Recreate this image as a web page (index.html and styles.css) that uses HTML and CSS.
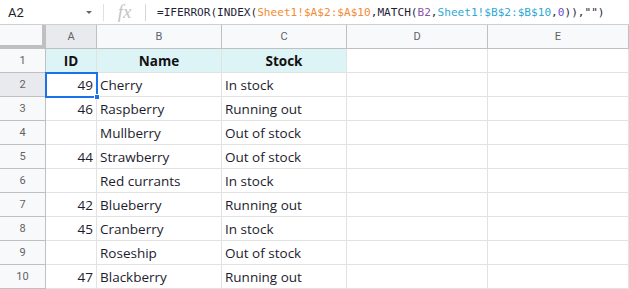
FILE: index.html
```html
<!DOCTYPE html>
<html lang="en">
<head>
    <meta charset="UTF-8">
    <title>Sheet</title>
    <link rel="stylesheet" href="styles.css">
</head>
<body>
    <div class="formula-bar">
        <div class="name-box">
            <span>A2</span>
            <span class="caret"></span>
        </div>
        <div class="fx">fx</div>
        <div class="formula">=IFERROR(INDEX(<span class="ref-a">Sheet1!$A$2:$A$10</span>,MATCH(<span class="ref-b">B2</span>,<span class="ref-c">Sheet1!$B$2:$B$10</span>,<span class="num">0</span>)),"")</div>
    </div>

    <div class="sheet">
        <div class="corner"></div>
        <div class="col-head active">A</div>
        <div class="col-head">B</div>
        <div class="col-head">C</div>
        <div class="col-head">D</div>
        <div class="col-head">E</div>

        <div class="row-head">1</div>
        <div class="cell title">ID</div>
        <div class="cell title">Name</div>
        <div class="cell title">Stock</div>
        <div class="cell"></div>
        <div class="cell"></div>

        <div class="row-head active">2</div>
        <div class="cell num selected">49<span class="handle"></span></div>
        <div class="cell">Cherry</div>
        <div class="cell">In stock</div>
        <div class="cell"></div>
        <div class="cell"></div>

        <div class="row-head">3</div>
        <div class="cell num">46</div>
        <div class="cell">Raspberry</div>
        <div class="cell">Running out</div>
        <div class="cell"></div>
        <div class="cell"></div>

        <div class="row-head">4</div>
        <div class="cell num"></div>
        <div class="cell">Mullberry</div>
        <div class="cell">Out of stock</div>
        <div class="cell"></div>
        <div class="cell"></div>

        <div class="row-head">5</div>
        <div class="cell num">44</div>
        <div class="cell">Strawberry</div>
        <div class="cell">Out of stock</div>
        <div class="cell"></div>
        <div class="cell"></div>

        <div class="row-head">6</div>
        <div class="cell num"></div>
        <div class="cell">Red currants</div>
        <div class="cell">In stock</div>
        <div class="cell"></div>
        <div class="cell"></div>

        <div class="row-head">7</div>
        <div class="cell num">42</div>
        <div class="cell">Blueberry</div>
        <div class="cell">Running out</div>
        <div class="cell"></div>
        <div class="cell"></div>

        <div class="row-head">8</div>
        <div class="cell num">45</div>
        <div class="cell">Cranberry</div>
        <div class="cell">In stock</div>
        <div class="cell"></div>
        <div class="cell"></div>

        <div class="row-head">9</div>
        <div class="cell num"></div>
        <div class="cell">Roseship</div>
        <div class="cell">Out of stock</div>
        <div class="cell"></div>
        <div class="cell"></div>

        <div class="row-head">10</div>
        <div class="cell num">47</div>
        <div class="cell">Blackberry</div>
        <div class="cell">Running out</div>
        <div class="cell"></div>
        <div class="cell"></div>
    </div>
</body>
</html>
```

FILE: styles.css
```css
* {
    box-sizing: border-box;
}
body {
    margin: 0;
    background: white;
    font-family: "Open Sans", Arial, sans-serif;
    width: 629px;
    overflow: hidden;
}
.formula-bar {
    display: flex;
    align-items: center;
    height: 25px;
    border-bottom: 1px solid #d0d0d0;
}
.name-box {
    width: 104px;
    height: 17px;
    display: flex;
    align-items: center;
    justify-content: space-between;
    padding: 0 8px 0 8px;
    border-right: 1px solid #e0e0e0;
    font-family: Roboto, Arial, sans-serif;
    font-size: 13px;
    color: #222;
}
.caret {
    width: 0;
    height: 0;
    border-left: 3px solid transparent;
    border-right: 3px solid transparent;
    border-top: 3px solid #666;
    margin-right: 3px;
}
.fx {
    width: 42px;
    height: 17px;
    text-align: center;
    border-right: 1px solid #d6d6d6;
    font-family: "Liberation Serif", serif;
    font-style: italic;
    font-size: 19px;
    line-height: 15px;
    color: #c4c4c4;
}
.formula {
    padding-left: 11px;
    font-family: "DejaVu Sans Mono", monospace;
    font-size: 11.1px;
    color: #1f1f3a;
    white-space: nowrap;
}
.ref-a { color: #f28b36; }
.ref-b { color: #8a55a8; }
.ref-c { color: #2fa8d3; }
.num { color: #6a4fd4; }

.sheet {
    display: grid;
    grid-template-columns: 46px 51px 125px 125px 141px 141px;
    grid-template-rows: 24px repeat(10, 24px);
}
.corner {
    background: #f8f9fa;
    border-right: 4px solid #c0c0c0;
    border-bottom: 4px solid #c0c0c0;
}
.col-head {
    background: #f8f9fa;
    border-right: 1px solid #c0c0c0;
    border-bottom: 1px solid #c0c0c0;
    display: flex;
    align-items: center;
    justify-content: center;
    font-family: Roboto, Arial, sans-serif;
    font-size: 11px;
    color: #5f6368;
}
.row-head {
    background: #f8f9fa;
    border-right: 1px solid #c0c0c0;
    border-bottom: 1px solid #c0c0c0;
    display: flex;
    align-items: center;
    justify-content: center;
    font-family: Roboto, Arial, sans-serif;
    font-size: 11px;
    color: #5f6368;
}
.active {
    background: #e8eaed;
}
.cell {
    position: relative;
    border-right: 1px solid #e2e2e2;
    border-bottom: 1px solid #e2e2e2;
    padding: 0 3px;
    display: flex;
    align-items: center;
    font-size: 13.5px;
    color: #1c1c2e;
    white-space: nowrap;
}
.sheet .cell.num {
    justify-content: flex-end;
    color: #1c1c2e;
}
.title {
    background: #ddf4f7;
    justify-content: center;
    font-weight: bold;
    color: #111;
}
.selected {
    outline: 2px solid #1a73e8;
    outline-offset: -1px;
}
.handle {
    position: absolute;
    right: -4px;
    bottom: -4px;
    width: 6px;
    height: 6px;
    background: #1a73e8;
    border: 1px solid white;
    z-index: 2;
}
```
